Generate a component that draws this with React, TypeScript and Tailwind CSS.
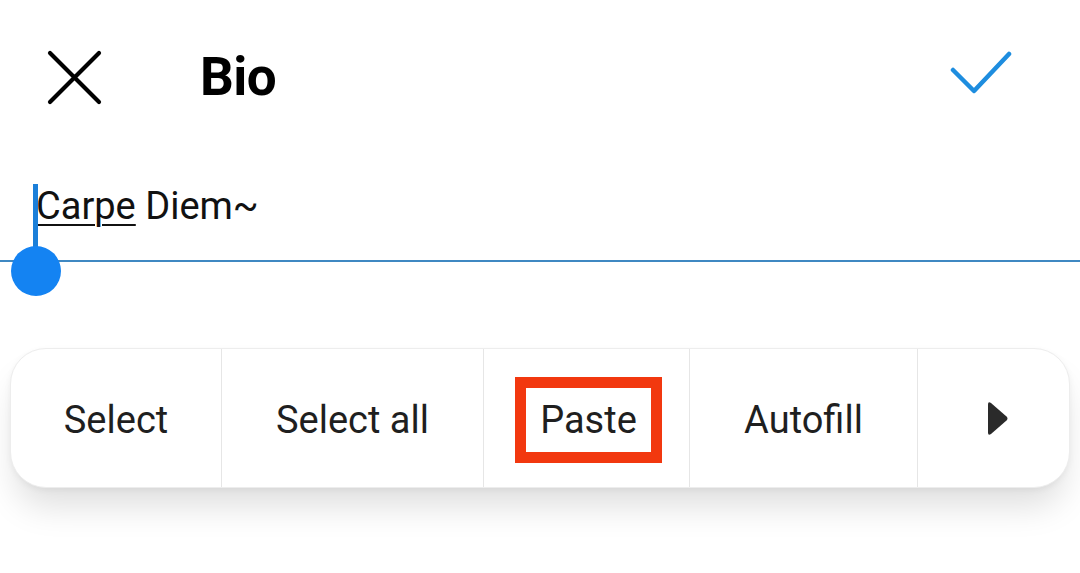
const actions = [
  { label: "Select", w: "w-[211px]" },
  { label: "Select all", w: "w-[262px]" },
  { label: "Paste", w: "w-[206px]", marked: true },
  { label: "Autofill", w: "w-[228px]" },
];

export default function App() {
  return (
    <div className="w-[1080px] h-[573px] bg-white overflow-hidden font-['Roboto',sans-serif] text-black">
      {/* top bar */}
      <div className="h-[154px] flex items-center pl-[46px] pr-[68px]">
        <svg width="58" height="58" viewBox="0 0 58 58" fill="none" stroke="#000" strokeWidth="4.2" strokeLinecap="round">
          <path d="M4 5 L53 54 M53 5 L4 54" />
        </svg>
        <h1 className="ml-[96px] text-[53px] font-bold leading-none tracking-[-0.5px]">Bio</h1>
        <svg
          width="62"
          height="58"
          viewBox="0 0 62 58"
          fill="none"
          stroke="#1e8ddf"
          strokeWidth="4.5"
          strokeLinecap="round"
          strokeLinejoin="round"
          className="ml-auto"
        >
          <path d="M3 22 L24 43 L59 6" />
        </svg>
      </div>

      {/* bio field */}
      <div className="relative pt-[29px]">
        <p className="pl-[36px] text-[38px] leading-[46px] text-[#111]">
          <span className="underline decoration-[2px] underline-offset-[5px]">Carpe</span> Diem~
        </p>
        <div className="mt-[31px] h-[2px] bg-[#3f88c2]" />
        <div className="absolute left-[33px] top-[30px] w-[5px] h-[70px] bg-[#1b7fd9]" />
        <div className="absolute left-[11px] top-[92px] w-[50px] h-[50px] rounded-full bg-[#1483f2]" />
      </div>

      {/* selection toolbar */}
      <div className="mt-[86px] mx-[10px] h-[140px] flex rounded-[36px] bg-white border border-[#ededed] shadow-[0_24px_34px_-6px_rgba(0,0,0,0.13),0_2px_6px_rgba(0,0,0,0.05)]">
        {actions.map((a) => (
          <div
            key={a.label}
            className={`${a.w} flex items-center justify-center border-r border-[#e6e6e6] pt-[4px]`}
          >
            {a.marked ? (
              <span className="ml-[4px] border-[11px] border-[#f2380f] px-[14px] py-[9px] text-[38px] leading-[46px] text-[#1f1f1f]">
                {a.label}
              </span>
            ) : (
              <span className="text-[38px] leading-[46px] text-[#1f1f1f]">{a.label}</span>
            )}
          </div>
        ))}
        <div className="flex-1 flex items-center justify-center pl-[6px]">
          <svg width="24" height="37" viewBox="0 0 24 37">
            <path
              d="M3 4.5 Q3 1 6 3 L21.5 16.5 Q23.5 18.5 21.5 20.5 L6 34 Q3 36 3 32.5 Z"
              fill="#2a2a2a"
            />
          </svg>
        </div>
      </div>
    </div>
  );
}
